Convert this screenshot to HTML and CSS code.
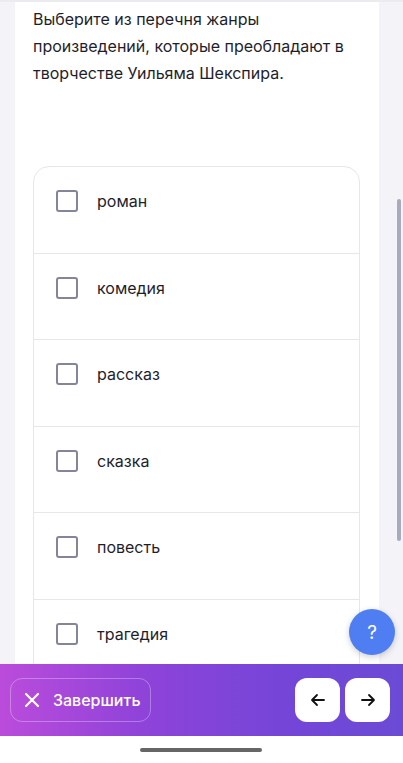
FILE: index.html
```html
<!DOCTYPE html>
<html lang="ru">
<head>
    <meta charset="UTF-8">
    <meta name="viewport" content="width=device-width, initial-scale=1.0">
    <link rel="stylesheet" href="styles.css">
</head>
<body>
<div class="page">
    <div class="content">
        <div class="card">
            <p class="question">Выберите из перечня жанры произведений, которые преобладают в творчестве Уильяма Шекспира.</p>

            <div class="options">
                <label class="option"><span class="box"></span><span>роман</span></label>
                <label class="option"><span class="box"></span><span>комедия</span></label>
                <label class="option"><span class="box"></span><span>рассказ</span></label>
                <label class="option"><span class="box"></span><span>сказка</span></label>
                <label class="option"><span class="box"></span><span>повесть</span></label>
                <label class="option"><span class="box"></span><span>трагедия</span></label>
            </div>
        </div>
        <div class="scrollbar"></div>
        <button class="help">?</button>
    </div>

    <div class="bottom-bar">
        <button class="finish">
            <svg width="16" height="16" viewBox="0 0 16 16">
                <path d="M2 2 L14 14 M14 2 L2 14" stroke="#fff" stroke-width="2.2" stroke-linecap="round"/>
            </svg>
            Завершить
        </button>
        <div class="nav">
            <button class="nav-btn">
                <svg width="18" height="18" viewBox="0 0 18 18">
                    <path d="M15 9 H3 M8 4 L3 9 L8 14" stroke="#111" stroke-width="1.8" fill="none" stroke-linecap="round" stroke-linejoin="round"/>
                </svg>
            </button>
            <button class="nav-btn">
                <svg width="18" height="18" viewBox="0 0 18 18">
                    <path d="M3 9 H15 M10 4 L15 9 L10 14" stroke="#111" stroke-width="1.8" fill="none" stroke-linecap="round" stroke-linejoin="round"/>
                </svg>
            </button>
        </div>
    </div>

    <div class="home">
        <div class="home-bar"></div>
    </div>
</div>
</body>
</html>
```

FILE: styles.css
```css
body {
    font-family: Inter, "Noto Sans", sans-serif;
    background-color: #f3f3f8;
    margin: 0;
    padding: 0;
}

.page {
    height: 763px;
    display: flex;
    flex-direction: column;
    overflow: hidden;
}

.content {
    flex: 1;
    position: relative;
    overflow: hidden;
    border-top: 2px solid #ebebf0;
    padding-left: 15px;
}

.card {
    width: 364px;
    box-sizing: border-box;
    height: 100%;
    background-color: #fff;
    padding: 0 19px 0 18px;
}

.question {
    margin: 0;
    padding-top: 4px;
    font-size: 16px;
    line-height: 27px;
    color: #1e1e2b;
}

.options {
    margin-top: 79px;
    border: 1px solid #e6e6ec;
    border-radius: 16px;
    overflow: hidden;
}

.option {
    height: 86.5px;
    box-sizing: border-box;
    display: flex;
    align-items: flex-start;
    gap: 19px;
    padding: 23px 22px 0;
    border-bottom: 1px solid #e6e6ec;
    font-size: 16px;
    line-height: 22px;
    color: #1e1e2b;
}

.box {
    width: 22px;
    height: 22px;
    box-sizing: border-box;
    border: 2.5px solid #85859a;
    border-radius: 3px;
    flex-shrink: 0;
}

.scrollbar {
    position: absolute;
    left: 397px;
    top: 197px;
    width: 4px;
    height: 342px;
    border-radius: 3px;
    background-color: #a8aabd;
}

.help {
    position: absolute;
    left: 349px;
    top: 607px;
    width: 46px;
    height: 46px;
    border-radius: 50%;
    border: none;
    background-color: #4e7ef2;
    color: #fff;
    font-family: Inter, sans-serif;
    font-size: 19px;
    box-shadow: 0 2px 6px rgba(0, 0, 0, 0.2);
}

.bottom-bar {
    height: 72px;
    flex-shrink: 0;
    display: flex;
    align-items: center;
    justify-content: space-between;
    padding: 0 13px 0 10px;
    background: linear-gradient(90deg, #bb4cdb 0%, #8f43d9 35%, #7545d8 70%, #6b4bd5 100%);
}

.finish {
    width: 141px;
    height: 44px;
    display: flex;
    align-items: center;
    gap: 13px;
    padding: 0 0 0 13px;
    border: 1px solid rgba(255, 255, 255, 0.3);
    border-radius: 12px;
    background: transparent;
    color: #fff;
    font-family: Inter, sans-serif;
    font-size: 16px;
    font-weight: 500;
}

.nav {
    display: flex;
    gap: 5px;
}

.nav-btn {
    width: 45px;
    height: 44px;
    display: flex;
    align-items: center;
    justify-content: center;
    border: none;
    border-radius: 12px;
    background-color: #fff;
    padding: 0;
}

.home {
    height: 27px;
    flex-shrink: 0;
    background-color: #fff;
    display: flex;
    justify-content: center;
    padding: 12px 2px 0 0;
    box-sizing: border-box;
}

.home-bar {
    width: 122px;
    height: 4px;
    border-radius: 2px;
    background-color: #666;
}
```
